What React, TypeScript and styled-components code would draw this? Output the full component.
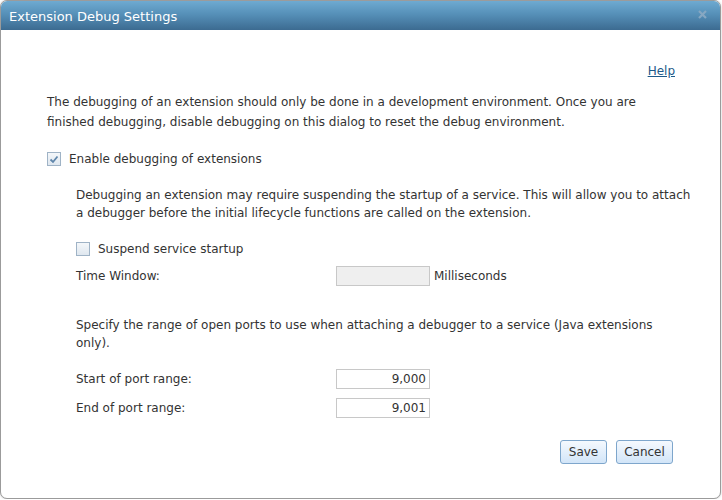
import React from "react";
import styled, { createGlobalStyle } from "styled-components";

const Global = createGlobalStyle`
  html, body { margin: 0; padding: 0; background: #ffffff; }
  body { font-family: "DejaVu Sans", Verdana, sans-serif; font-size: 12px; color: #333333; }
`;

const Dialog = styled.div`
  box-sizing: border-box;
  width: 721px;
  height: 499px;
  border: 1px solid #9b9b9b;
  border-radius: 7px;
  overflow: hidden;
  background: #ffffff;
  display: flex;
  flex-direction: column;
  box-shadow: 0 0 2px rgba(0, 0, 0, 0.25);
`;

const TitleBar = styled.div`
  height: 29px;
  flex: none;
  display: flex;
  align-items: center;
  justify-content: space-between;
  padding: 0 12px 0 8px;
  background: linear-gradient(#6eaad1 0%, #5690b8 45%, #3c6b91 100%);
`;

const Title = styled.div`
  color: #ffffff;
  font-size: 13px;
  margin-top: 2px;
`;

const CloseButton = styled.button`
  border: 0;
  background: transparent;
  padding: 0;
  width: 10px;
  height: 10px;
  display: flex;
  cursor: pointer;
  margin-bottom: 2px;
`;

const Body = styled.div`
  flex: 1;
  display: flex;
  flex-direction: column;
  padding: 31px 45px 0 46px;
`;

const HelpRow = styled.div`
  display: flex;
  justify-content: flex-end;
  line-height: 20px;
`;

const HelpLink = styled.a`
  color: #1d5a8a;
  text-decoration: underline;
`;

const Paragraph = styled.p<{ $lh?: number; $top?: number; $maxWidth?: number }>`
  margin: ${(p) => p.$top ?? 0}px 0 0 0;
  line-height: ${(p) => p.$lh ?? 20}px;
  max-width: ${(p) => (p.$maxWidth ? `${p.$maxWidth}px` : "none")};
`;

const CheckRow = styled.label<{ $top: number }>`
  display: flex;
  align-items: center;
  gap: 8px;
  height: 20px;
  margin-top: ${(p) => p.$top}px;
`;

const Box = styled.span`
  box-sizing: border-box;
  width: 14px;
  height: 14px;
  border: 1px solid #9fb3c6;
  background: linear-gradient(#f4f7fa, #dfe7ef);
  display: flex;
  align-items: center;
  justify-content: center;
`;

const Indent = styled.div`
  display: flex;
  flex-direction: column;
  padding-left: 29px;
  margin-right: -25px;
`;

const FieldRow = styled.div<{ $top: number }>`
  display: grid;
  grid-template-columns: 256px 94px auto;
  align-items: center;
  column-gap: 4px;
  margin-top: ${(p) => p.$top}px;
  margin-right: 25px;
`;

const Input = styled.input<{ $disabled?: boolean }>`
  box-sizing: border-box;
  width: 94px;
  height: 20px;
  border: 1px solid #c8c8c8;
  background: ${(p) => (p.$disabled ? "#efefef" : "#ffffff")};
  font-family: "DejaVu Sans", Verdana, sans-serif;
  font-size: 12px;
  color: #333333;
  text-align: right;
  padding: 0 3px;
  margin: 0;
  outline: none;
`;

const Buttons = styled.div`
  display: flex;
  justify-content: flex-end;
  gap: 9px;
  margin-top: 22px;
  padding-right: 2px;
`;

const Button = styled.button<{ $width: number }>`
  box-sizing: border-box;
  width: ${(p) => p.$width}px;
  height: 24px;
  padding: 0;
  border: 1px solid #7ea6cc;
  border-radius: 3px;
  background: linear-gradient(#f5f9fe, #d2e5f8);
  font-family: "DejaVu Sans", Verdana, sans-serif;
  font-size: 12px;
  color: #333333;
  cursor: pointer;
`;

function CheckBox({ checked }: { checked?: boolean }) {
  return (
    <Box>
      {checked && (
        <svg width="10" height="9" viewBox="0 0 10 9">
          <path d="M1.5 4.5 L4 7 L8.5 1.5" fill="none" stroke="#5f86ab" strokeWidth="1.8" />
        </svg>
      )}
    </Box>
  );
}

export default function App() {
  return (
    <>
      <Global />
      <Dialog>
        <TitleBar>
          <Title>Extension Debug Settings</Title>
          <CloseButton aria-label="Close">
            <svg width="9" height="9" viewBox="0 0 9 9">
              <path d="M1 1 L8 8 M8 1 L1 8" stroke="#86a7c2" strokeWidth="2.2" />
            </svg>
          </CloseButton>
        </TitleBar>
        <Body>
          <HelpRow>
            <HelpLink href="#">Help</HelpLink>
          </HelpRow>
          <Paragraph $top={11}>
            The debugging of an extension should only be done in a development environment. Once you are
            finished debugging, disable debugging on this dialog to reset the debug environment.
          </Paragraph>
          <CheckRow $top={17}>
            <CheckBox checked />
            <span>Enable debugging of extensions</span>
          </CheckRow>
          <Indent>
            <Paragraph $lh={18} $top={17}>
              Debugging an extension may require suspending the startup of a service. This will allow you to attach
              a debugger before the initial lifecycle functions are called on the extension.
            </Paragraph>
            <CheckRow $top={17}>
              <CheckBox />
              <span>Suspend service startup</span>
            </CheckRow>
            <FieldRow $top={7}>
              <span>Time Window:</span>
              <Input $disabled disabled defaultValue="" />
              <span>Milliseconds</span>
            </FieldRow>
            <Paragraph $lh={18} $top={30} $maxWidth={600}>
              Specify the range of open ports to use when attaching a debugger to a service (Java extensions
              only).
            </Paragraph>
            <FieldRow $top={17}>
              <span>Start of port range:</span>
              <Input defaultValue="9,000" />
            </FieldRow>
            <FieldRow $top={9}>
              <span>End of port range:</span>
              <Input defaultValue="9,001" />
            </FieldRow>
          </Indent>
          <Buttons>
            <Button $width={47}>Save</Button>
            <Button $width={57}>Cancel</Button>
          </Buttons>
        </Body>
      </Dialog>
    </>
  );
}
